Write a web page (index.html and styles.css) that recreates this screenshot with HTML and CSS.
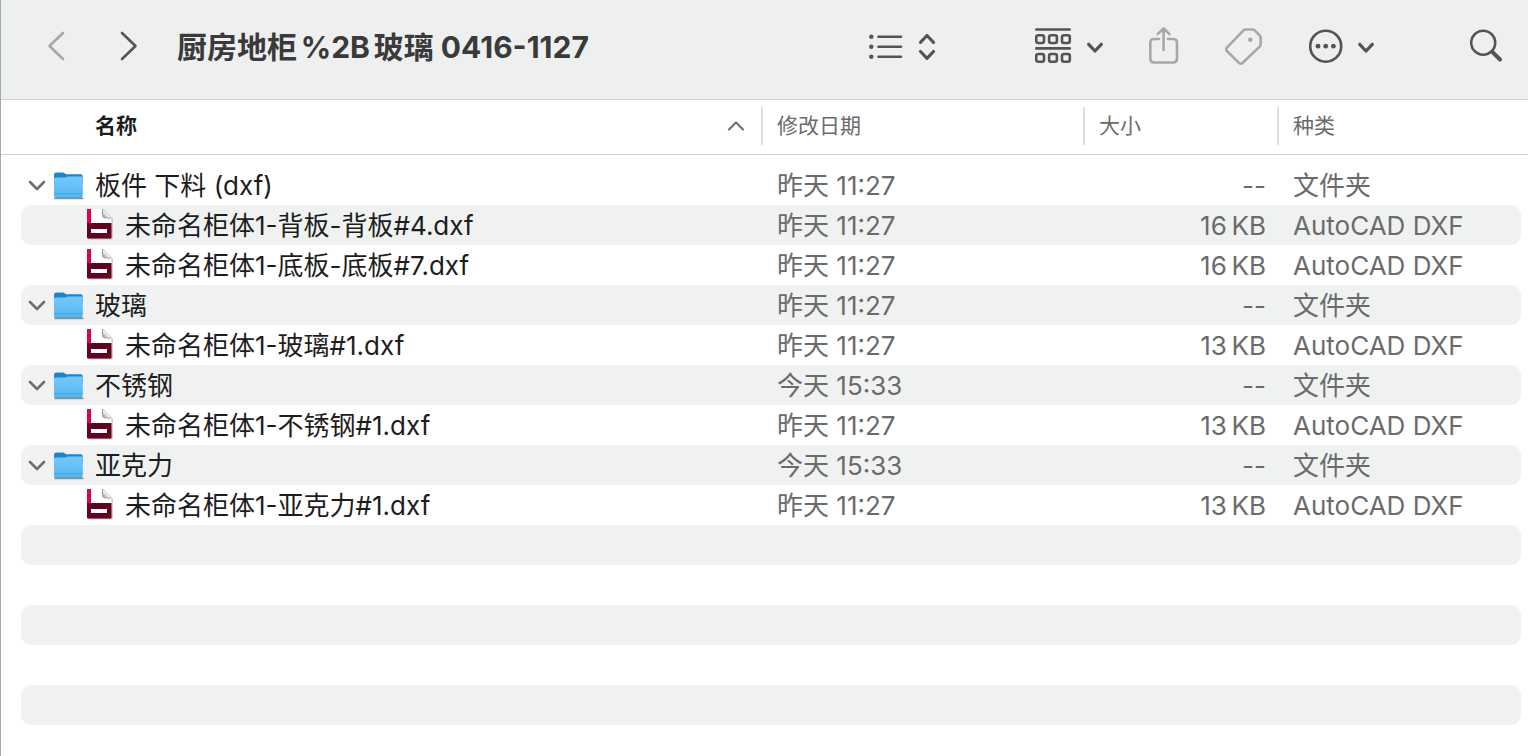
FILE: index.html
```html
<!DOCTYPE html>
<html lang="zh-CN">
<head>
<meta charset="utf-8">
<title>厨房地柜%2B玻璃 0416-1127</title>
<link rel="stylesheet" href="styles.css">
</head>
<body>
<svg class="defs" aria-hidden="true">
  <defs>
    <linearGradient id="folder-front" x1="0" y1="0" x2="0" y2="1">
      <stop offset="0" stop-color="#74c9fb"/>
      <stop offset="1" stop-color="#55b5f1"/>
    </linearGradient>
    <linearGradient id="page-fold" x1="0" y1="1" x2="1" y2="0">
      <stop offset="0" stop-color="#8e8e8e"/>
      <stop offset="0.35" stop-color="#e4e4e4"/>
      <stop offset="0.55" stop-color="#ffffff"/>
    </linearGradient>
    <symbol id="folder" viewBox="0 0 32 30">
      <path d="M2 27.500H30" stroke="#8d9297" stroke-width="1.600" stroke-linecap="round"/>
      <path d="M1 4Q1 1.500 3.500 1.500H9.500Q11 1.500 12 2.500L13 3.300H27.500Q29.800 3.300 29.800 5.500V12H1Z" fill="#1a85cf"/>
      <path d="M1 8Q1 6.500 2.500 6.500H11Q12.300 6.500 13.300 5.900L13.800 5.600H28.300Q29.800 5.600 29.800 7V25Q29.800 27 27.800 27H3Q1 27 1 25Z" fill="url(#folder-front)"/>
      <path d="M1.500 22.700H29.500M2 26.600H29" stroke="#3e9edb" stroke-width="0.800"/>
    </symbol>
    <symbol id="dxf" viewBox="0 0 26 32">
      <path d="M1 30.800H25V10" fill="none" stroke="#a5a5a5" stroke-width="1"/>
      <path d="M0.500 1H16L24.500 9.500V18H0.500Z" fill="#fff"/>
      <path d="M0 1H4V15H0Z" fill="#e4004b"/>
      <path d="M0 15H24.500V29.500Q24.500 30.500 23.500 30.500H1Q0 30.500 0 29.500Z" fill="#640020"/>
      <path d="M4 21H20V25H4Z" fill="#fff"/>
      <path d="M16 1V7.500Q16 9.500 18 9.500H24.500Z" fill="url(#page-fold)"/>
      <path d="M15.500 1V7.500Q15.500 10 18 10H24.500" fill="none" stroke="#8f8f8f" stroke-width="0.900"/>
      <path d="M16 1L24.500 9.500" stroke="#bbb" stroke-width="0.600"/>
    </symbol>
    <symbol id="disclosure" viewBox="0 0 18 12">
      <path d="M2 2L9 9L16 2" fill="none" stroke="#6e6e6e" stroke-width="2.600" stroke-linecap="round" stroke-linejoin="round"/>
    </symbol>
  </defs>
</svg>

<main class="window">
  <header class="toolbar">
    <nav class="history" aria-label="浏览历史">
      <button class="tool dim" type="button" aria-label="返回"><svg width="18" height="44" viewBox="0 0 18 44"><path d="M16 9L2.500 22L16 35"/></svg></button>
      <button class="tool" type="button" aria-label="前进"><svg width="18" height="44" viewBox="0 0 18 44"><path d="M2 9L15.500 22L2 35"/></svg></button>
    </nav>
    <h1 class="title">厨房地柜%2B玻璃 0416-1127</h1>
    <div class="actions">
      <button class="tool" type="button" aria-label="列表视图">
        <svg width="71" height="44" viewBox="0 0 71 44"><g class="solid"><circle cx="2.300" cy="12.700" r="2.200"/><circle cx="2.300" cy="22.700" r="2.200"/><circle cx="2.300" cy="32.700" r="2.200"/></g><path d="M9.500 12.700H32M9.500 22.700H32M9.500 32.700H32"/><path class="bold" d="M51.500 18.300L58 11.500L64.500 18.300M51.500 27.500L58 34.300L64.500 27.500"/></svg>
      </button>
      <div class="cluster">
        <button class="tool" type="button" aria-label="分组">
          <svg width="68" height="44" viewBox="0 0 68 44"><path d="M1.300 5.500H34.700M1.300 24.400H34.700"/><rect x="1.200" y="11.200" width="7.800" height="7.800" rx="2"/><rect x="14.100" y="11.200" width="7.800" height="7.800" rx="2"/><rect x="27" y="11.200" width="7.800" height="7.800" rx="2"/><rect x="1.200" y="30" width="7.800" height="7.800" rx="2"/><rect x="14.100" y="30" width="7.800" height="7.800" rx="2"/><rect x="27" y="30" width="7.800" height="7.800" rx="2"/><path class="bold" d="M53.700 20.300L60 27L66.300 20.300"/></svg>
        </button>
        <button class="tool dim" type="button" aria-label="共享">
          <svg width="30" height="44" viewBox="0 0 30 44"><path d="M10 15H5Q1.300 15 1.300 18.700V34.800Q1.300 38.500 5 38.500H24.300Q28 38.500 28 34.800V18.700Q28 15 24.300 15H19M14.600 4.500V26M8.700 10.200L14.600 4.300L20.500 10.200"/></svg>
        </button>
        <button class="tool dim" type="button" aria-label="标签">
          <svg width="38" height="44" viewBox="0 0 38 44"><path d="M18.500 6.300Q19.300 5.500 20.500 5.500H27.500Q28.800 5.500 29.700 6.400L34.700 11.400Q35.600 12.300 35.600 13.600V20.500Q35.600 21.700 34.700 22.600L17.500 39Q15.700 40.500 14 38.900L1.900 27Q0.300 25.400 1.900 23.600Z"/><circle class="solid" cx="25.300" cy="15.700" r="2.300"/></svg>
        </button>
        <button class="tool" type="button" aria-label="更多操作">
          <svg width="66" height="44" viewBox="0 0 66 44"><circle cx="16.700" cy="22.200" r="15.500"/><g class="solid"><circle cx="9" cy="22.200" r="2.400"/><circle cx="16.700" cy="22.200" r="2.400"/><circle cx="24.400" cy="22.200" r="2.400"/></g><path class="bold" d="M50.700 20.300L57 27L63.300 20.300"/></svg>
        </button>
      </div>
      <button class="tool" type="button" aria-label="搜索">
        <svg width="33" height="44" viewBox="0 0 33 44"><circle cx="13.200" cy="18.700" r="12"/><path class="handle" d="M22.300 27.800L30 35.500"/></svg>
      </button>
    </div>
  </header>

  <table class="files">
    <thead>
      <tr>
        <th class="sorted" scope="col"><button type="button">名称<svg width="18" height="12" viewBox="0 0 18 12"><path d="M2 9.500L9 2.500L16 9.500"/></svg></button></th>
        <th scope="col"><button type="button">修改日期</button></th>
        <th scope="col"><button type="button">大小</button></th>
        <th scope="col"><button type="button">种类</button></th>
      </tr>
    </thead>
    <tbody>
      <tr><td class="name"><button type="button" aria-label="折叠"><svg><use href="#disclosure"/></svg></button><svg class="folder"><use href="#folder"/></svg>板件 下料 (dxf)</td><td>昨天 11:27</td><td class="size">--</td><td>文件夹</td></tr>
      <tr><td class="name child"><svg class="dxf"><use href="#dxf"/></svg>未命名柜体1-背板-背板#4.dxf</td><td>昨天 11:27</td><td class="size">16&#8201;KB</td><td>AutoCAD DXF</td></tr>
      <tr><td class="name child"><svg class="dxf"><use href="#dxf"/></svg>未命名柜体1-底板-底板#7.dxf</td><td>昨天 11:27</td><td class="size">16&#8201;KB</td><td>AutoCAD DXF</td></tr>
      <tr><td class="name"><button type="button" aria-label="折叠"><svg><use href="#disclosure"/></svg></button><svg class="folder"><use href="#folder"/></svg>玻璃</td><td>昨天 11:27</td><td class="size">--</td><td>文件夹</td></tr>
      <tr><td class="name child"><svg class="dxf"><use href="#dxf"/></svg>未命名柜体1-玻璃#1.dxf</td><td>昨天 11:27</td><td class="size">13&#8201;KB</td><td>AutoCAD DXF</td></tr>
      <tr><td class="name"><button type="button" aria-label="折叠"><svg><use href="#disclosure"/></svg></button><svg class="folder"><use href="#folder"/></svg>不锈钢</td><td>今天 15:33</td><td class="size">--</td><td>文件夹</td></tr>
      <tr><td class="name child"><svg class="dxf"><use href="#dxf"/></svg>未命名柜体1-不锈钢#1.dxf</td><td>昨天 11:27</td><td class="size">13&#8201;KB</td><td>AutoCAD DXF</td></tr>
      <tr><td class="name"><button type="button" aria-label="折叠"><svg><use href="#disclosure"/></svg></button><svg class="folder"><use href="#folder"/></svg>亚克力</td><td>今天 15:33</td><td class="size">--</td><td>文件夹</td></tr>
      <tr><td class="name child"><svg class="dxf"><use href="#dxf"/></svg>未命名柜体1-亚克力#1.dxf</td><td>昨天 11:27</td><td class="size">13&#8201;KB</td><td>AutoCAD DXF</td></tr>
      <tr></tr>
      <tr></tr>
      <tr></tr>
      <tr></tr>
      <tr></tr>
    </tbody>
  </table>
</main>
</body>
</html>
```

FILE: styles.css
```css
* {
  box-sizing: border-box;
}

body {
  margin: 0;
  background: #fff;
  color: #1d1d1d;
  font-family: Inter, "Noto Sans CJK SC", sans-serif;
  font-size: 26px;
}

button {
  padding: 0;
  border: 0;
  background: none;
  color: inherit;
  font: inherit;
}

svg {
  display: block;
  flex: none;
}

.defs {
  position: absolute;
  width: 0;
  height: 0;
}

.window {
  min-height: 100vh;
  border-left: 1px solid #a3a9b0;
}

/* Toolbar */

.toolbar {
  display: flex;
  align-items: center;
  height: 100px;
  padding: 0 25px 8px 46px;
  border-bottom: 1px solid #d0d2d1;
  background: #eef0ef;
}

.history {
  display: flex;
  gap: 55px;
  margin-right: 39px;
}

.title {
  flex: 1;
  margin: 0;
  padding-top: 2px;
  color: #3a3a3a;
  font-size: 30px;
  font-weight: 700;
  line-height: 44px;
  white-space: nowrap;
  text-autospace: normal;
}

.actions {
  display: flex;
  gap: 95px;
}

.cluster {
  display: flex;
  gap: 46px;
}

.tool {
  color: #535554;
}

.tool.dim {
  color: #a6a8a7;
}

.tool svg {
  fill: none;
  stroke: currentColor;
  stroke-width: 2.6;
  stroke-linecap: round;
  stroke-linejoin: round;
}

.tool .solid {
  fill: currentColor;
  stroke: none;
}

.tool .bold {
  stroke-width: 3.2;
}

.tool .handle {
  stroke-width: 4;
}

/* File list */

.files,
.files thead,
.files tbody {
  display: block;
}

.files tr {
  display: grid;
  grid-template-columns: 1fr 322px 194px 244px;
}

.files thead tr {
  height: 55px;
  padding: 7px 7px 9px 20px;
  border-bottom: 1px solid #d0d2d1;
}

.files th {
  padding: 0;
  border-left: 2px solid #dedede;
  color: #6b6b6b;
  font-size: 21px;
  font-weight: 400;
}

.files th button {
  display: flex;
  align-items: center;
  justify-content: space-between;
  width: 100%;
  height: 100%;
  padding: 0 0 4px 14px;
}

.files th.sorted {
  border-left: 0;
  color: #1d1d1d;
  font-weight: 700;
}

.files th.sorted button {
  padding: 0 16px 4px 74px;
}

.files th svg {
  margin-top: 4px;
  fill: none;
  stroke: #6b6b6b;
  stroke-width: 2;
  stroke-linecap: round;
  stroke-linejoin: round;
}

.files tbody {
  padding: 10px 7px 0 20px;
}

.files tbody tr {
  height: 40px;
  border-radius: 10px;
}

.files tbody tr:nth-child(even) {
  background: #f0f2f1;
}

.files td {
  padding: 2px 0 0 16px;
  color: #6b6b6b;
  line-height: 38px;
  white-space: nowrap;
}

.files .size {
  padding: 2px 11px 0 0;
  text-align: right;
}

.files .name {
  display: flex;
  align-items: center;
  padding-left: 7px;
  color: #1d1d1d;
}

.files .child {
  padding-left: 66px;
}

.name button svg {
  width: 18px;
  height: 12px;
}

.folder {
  width: 32px;
  height: 30px;
  margin: 0 10px 0 7px;
}

.dxf {
  width: 26px;
  height: 32px;
  margin: 0 12px 4px 0;
}
```
